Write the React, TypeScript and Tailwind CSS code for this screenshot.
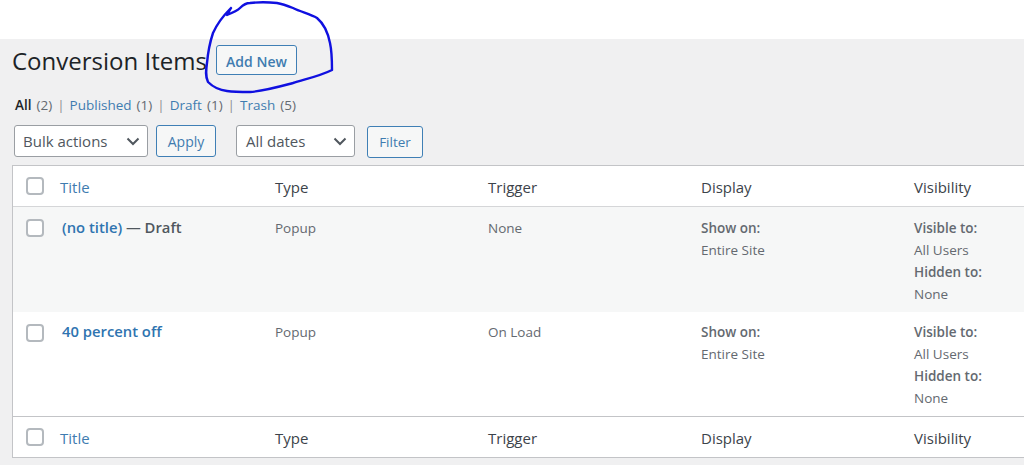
const cols = "grid grid-cols-[47px_215px_213px_213px_213px_1fr]";
const font = "font-['Open_Sans','Noto_Sans',sans-serif]";

const Check = () => (
  <div className="w-[18px] h-[18px] rounded-[4px] border-2 border-[#b4b9be] bg-white" />
);

const Button = (props: { label: string; className: string }) => (
  <button
    className={
      "h-[32px] border border-[#3f7fb5] rounded-[3px] bg-[#f6f7f7] text-[#3f7cb0] text-[14px] " +
      props.className
    }
  >
    {props.label}
  </button>
);

const Select = (props: { label: string; className: string }) => (
  <div
    className={
      "h-[32px] flex items-center justify-between bg-white border border-[#9a9ea3] rounded-[3px] pr-[7px] text-[15px] text-[#50575e] " +
      props.className
    }
  >
    <span>{props.label}</span>
    <svg width="14" height="14" viewBox="0 0 14 14" fill="none">
      <path d="M1.5 4.5 L7 10 L12.5 4.5" stroke="#50575e" strokeWidth="2" />
    </svg>
  </div>
);

const HeadRow = (props: { className: string }) => (
  <div className={cols + " h-[41px] items-center text-[15px] text-[#3c434a] bg-white " + props.className}>
    <div className="pl-[13px]">
      <Check />
    </div>
    <div className="text-[#3f7cb0] pt-[2px]">Title</div>
    <div className="pt-[2px]">Type</div>
    <div className="pt-[2px]">Trigger</div>
    <div className="pt-[2px]">Display</div>
    <div className="pt-[2px]">Visibility</div>
  </div>
);

const Row = (props: { title: string; draft?: boolean; trigger: string; className: string; checkClass: string }) => (
  <div className={cols + " text-[13.5px] text-[#646970] " + props.className}>
    <div className={"pl-[13px] " + props.checkClass}>
      <Check />
    </div>
    <div className="pl-[2px] text-[14.8px] font-semibold leading-[20px]">
      <span className="text-[#2f74b0]">{props.title}</span>
      {props.draft && <span className="text-[#50575e]"> — Draft</span>}
    </div>
    <div className="leading-[22px]">Popup</div>
    <div className="leading-[22px]">{props.trigger}</div>
    <div className="leading-[22px]">
      <div className="font-semibold">Show on:</div>
      <div>Entire Site</div>
    </div>
    <div className="leading-[22px]">
      <div className="font-semibold">Visible to:</div>
      <div>All Users</div>
      <div className="font-semibold">Hidden to:</div>
      <div>None</div>
    </div>
  </div>
);

const Filter = (props: { label: string; count: number; active?: boolean; last?: boolean }) => (
  <div className="flex">
    <span className={props.active ? "font-semibold text-[#1d2327]" : "text-[#3f7cb0]"}>{props.label}</span>
    <span className="ml-[5px]">({props.count})</span>
    {!props.last && <span className="mx-[5px] text-[#8c8f94]">|</span>}
  </div>
);

export default function App() {
  return (
    <div className={"relative w-[1024px] h-[465px] overflow-hidden bg-white " + font}>
      <div className="mt-[39px] h-[426px] bg-[#f0f0f1] pl-[12px]">
        <div className="flex items-start h-[36px]">
          <h1 className="w-[204px] mt-[7px] text-[24px] leading-[30px] text-[#1d2327]">Conversion Items</h1>
          <Button label="Add New" className="w-[81px] !h-[30px] mt-[6px] pt-[2px] font-semibold" />
        </div>
        <div className="mt-[20px] pl-[3px] h-[20px] leading-[20px] text-[13.5px] text-[#646970] flex">
          <Filter label="All" count={2} active />
          <Filter label="Published" count={1} />
          <Filter label="Draft" count={1} />
          <Filter label="Trash" count={5} last />
        </div>
        <div className="flex items-start mt-[10px] pl-[2px]">
          <Select label="Bulk actions" className="w-[134px] pl-[8px]" />
          <Button label="Apply" className="w-[60px] ml-[8px]" />
          <Select label="All dates" className="w-[119px] ml-[20px] pl-[9px]" />
          <Button label="Filter" className="w-[56px] ml-[12px] mt-[1px] !text-[13.5px]" />
        </div>
        <div className="mt-[7px] w-[1030px] border border-[#c3c4c7]">
          <HeadRow className="border-b border-[#d5d6d8]" />
          <Row title="(no title)" draft trigger="None" className="h-[105px] pt-[10px] bg-[#f6f7f7]" checkClass="pt-[2px]" />
          <Row title="40 percent off" trigger="On Load" className="h-[104px] pt-[9px] bg-white" checkClass="pt-[3px]" />
          <HeadRow className="border-t border-[#c3c4c7]" />
        </div>
      </div>
      <svg className="absolute left-0 top-0" width="340" height="100" viewBox="0 0 340 100" fill="none">
        <path
          d="M231 8 L227 15 C232 13 237 11 240 8 C243 5 246 3 250 3 C258 2 268 2 277 3 C283 4 288 6 293 8 C301 12 310 14 317 18 C323 23 328 33 330 43 C332 52 332 62 332 70 C320 76 306 79 293 83 C278 87 264 91 250 92 C242 92 234 92 227 91 C219 90 212 86 208 82 C205 76 206 70 207 63 C208 52 210 42 213 33 C217 24 223 16 231 8"
          stroke="#1010e0"
          strokeWidth="2.4"
          strokeLinecap="round"
          strokeLinejoin="round"
        />
      </svg>
    </div>
  );
}
